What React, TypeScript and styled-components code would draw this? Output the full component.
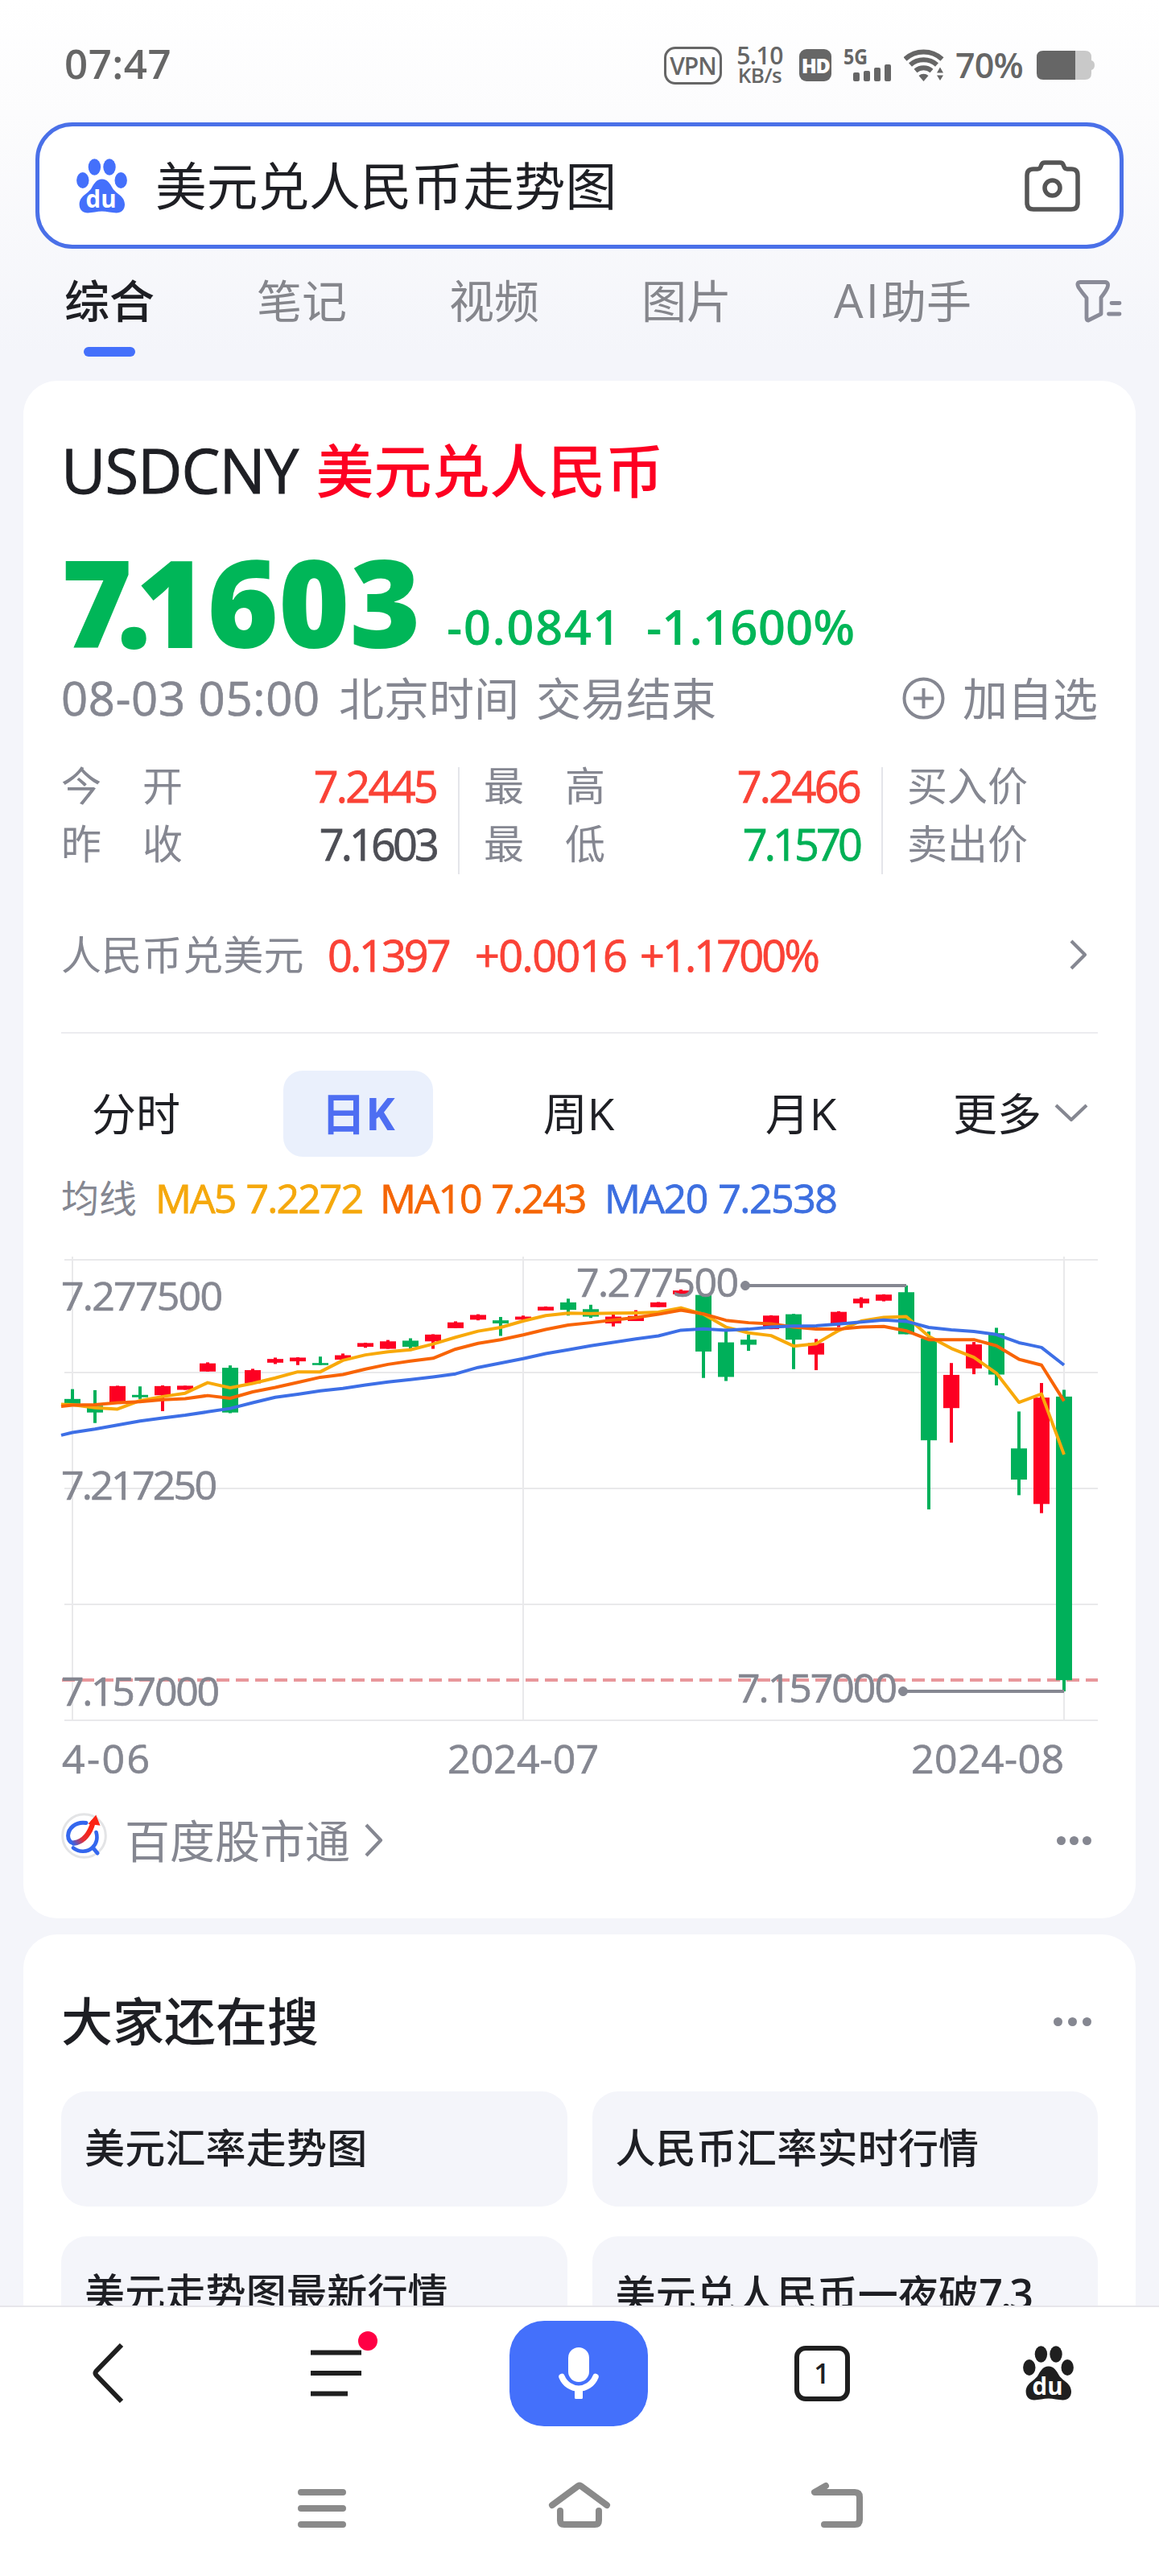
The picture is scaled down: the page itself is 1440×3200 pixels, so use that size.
import React from "react";
import styled, { createGlobalStyle } from "styled-components";

const palette = {
  ink: "#1e1f24",
  gray: "#858791",
  status: "#666666",
  blue: "#4e6ef2",
  red: "#fd0022",
  softRed: "#fa4236",
  green: "#00b658",
  candleGreen: "#00b05a",
  page: "#f4f5fa",
};

const GlobalStyle = createGlobalStyle`
  * { box-sizing: border-box; }
  html, body { margin: 0; padding: 0; background: #fff; }
  body { font-family: "Open Sans", "Noto Sans CJK SC", sans-serif; color: ${palette.ink}; }
  svg { display: block; flex: none; }
`;

const Screen = styled.div`
  width: 1440px;
  height: 3200px;
  display: flex;
  flex-direction: column;
  overflow: hidden;
  background: linear-gradient(#ffffff 0, #fcfcfd 140px, ${palette.page} 440px);
`;

/* ---------- status bar ---------- */

const StatusBar = styled.header`
  height: 152px;
  flex: none;
  padding: 0 80px 0 80px;
  display: flex;
  justify-content: space-between;
  color: ${palette.status};
`;

const Clock = styled.div`
  font-size: 51px;
  font-weight: 600;
  line-height: 156px;
  letter-spacing: 0.5px;
`;

const StatusIcons = styled.div`
  display: flex;
  align-items: center;
  height: 162px;
`;

const VpnBadge = styled.div`
  width: 72px;
  height: 47px;
  border: 3.5px solid ${palette.status};
  border-radius: 14px;
  font-size: 30px;
  font-weight: 600;
  line-height: 41px;
  letter-spacing: -1px;
  text-align: center;
`;

const NetSpeed = styled.div`
  width: 62px;
  margin-left: 16px;
  text-align: center;
  font-size: 30px;
  font-weight: 600;
  line-height: 25px;
  letter-spacing: -0.5px;
`;

const NetUnit = styled.div`
  font-size: 26px;
  line-height: 25px;
`;

const HdBadge = styled.div`
  width: 40px;
  height: 40px;
  margin-left: 18px;
  border-radius: 9px;
  background: ${palette.status};
  color: #fff;
  font-size: 25px;
  font-weight: 800;
  line-height: 40px;
  letter-spacing: -1.5px;
  text-align: center;
`;

const Signal = styled.svg`
  margin-left: 15px;
  overflow: visible;
`;

const Wifi = styled.svg`
  margin-left: 15px;
`;

const BatteryText = styled.div`
  width: 88px;
  margin-left: 14px;
  font-size: 43px;
  font-weight: 600;
  line-height: 48px;
  letter-spacing: -0.8px;
`;

const Battery = styled.svg`
  margin-left: 13px;
`;

/* ---------- search ---------- */

const SearchBox = styled.div`
  height: 157px;
  flex: none;
  margin: 0 44px;
  padding: 0 49px 0 46px;
  display: flex;
  align-items: center;
  border: 5px solid #4a70e8;
  border-radius: 46px;
  background: #fff;
`;

const Query = styled.div`
  flex: 1;
  margin-left: 35px;
  font-size: 63.7px;
  line-height: 90px;
`;

const TabBar = styled.nav`
  height: 164px;
  flex: none;
  display: flex;
  align-items: flex-start;
  gap: 127px;
  padding: 24px 0 0 80px;
`;

const Tab = styled.div<{ $active?: boolean }>`
  flex: none;
  display: flex;
  flex-direction: column;
  align-items: center;
  font-size: 56px;
  line-height: 80px;
  font-weight: ${(p) => (p.$active ? 500 : 400)};
  color: ${(p) => (p.$active ? palette.ink : "#85868c")};
  white-space: nowrap;
`;

const TabLabel = styled.div`
  display: flex;
`;

const TabLatin = styled.span`
  font-size: 58px;
  letter-spacing: 3px;
`;

const TabMark = styled.div`
  width: 64px;
  height: 12px;
  margin-top: 18px;
  border-radius: 6px;
  background: #4470fb;
`;

const FilterButton = styled.div`
  padding: 14px 0 0 2px;
`;

/* ---------- cards ---------- */

const Feed = styled.main`
  flex: 1;
  min-height: 0;
  overflow: hidden;
  display: flex;
  flex-direction: column;
  gap: 20px;
`;

const Card = styled.section`
  flex: none;
  margin: 0 29px;
  padding: 46px 47px 67px;
  border-radius: 42px;
  background: #fff;
`;

const Title = styled.h1`
  margin: 0;
  height: 132px;
  padding-bottom: 4px;
  display: flex;
  align-items: center;
  gap: 22px;
  font-size: 76px;
  font-weight: 400;
  letter-spacing: -0.9px;
  -webkit-text-stroke: 1px currentColor;
`;

const TitleName = styled.span`
  padding-bottom: 5px;
  color: ${palette.red};
  font-size: 72px;
  font-weight: 500;
  letter-spacing: 0;
  -webkit-text-stroke: 0;
`;

const PriceRow = styled.div`
  height: 191px;
  display: flex;
  align-items: flex-end;
  color: ${palette.green};
`;

const Price = styled.div`
  width: 479px;
  font-size: 151px;
  line-height: 191px;
  font-weight: 800;
`;

const Kern = styled.span<{ $by: number }>`
  letter-spacing: ${(p) => p.$by}px;
`;

const Change = styled.div<{ $w: number; $spacing: number }>`
  width: ${(p) => p.$w}px;
  white-space: nowrap;
  font-size: 60px;
  line-height: 127px;
  font-weight: 600;
  letter-spacing: ${(p) => p.$spacing}px;
`;

const TimeRow = styled.div`
  height: 50px;
  display: flex;
  align-items: center;
  font-size: 56px;
  line-height: 50px;
  color: ${palette.gray};
  white-space: nowrap;
`;

const Stamp = styled.span`
  width: 345px;
  font-size: 58px;
  letter-spacing: 0.7px;
  -webkit-text-stroke: 0.7px currentColor;
`;

const TimeNote = styled.span`
  width: 245px;
`;

const AddButton = styled.div`
  margin-left: auto;
  display: flex;
  align-items: center;
  gap: 22px;
`;

const Stats = styled.div`
  margin-top: 48px;
  height: 146px;
  display: flex;
`;

const StatColumn = styled.div<{ $w: number }>`
  width: ${(p) => p.$w}px;
`;

const StatRow = styled.div`
  height: 72px;
  display: flex;
  align-items: center;
  justify-content: space-between;
`;

const StatLabel = styled.div`
  width: 151px;
  display: flex;
  justify-content: space-between;
  font-size: 50px;
  line-height: 72px;
  color: ${palette.gray};
  white-space: nowrap;
`;

const Num = styled.div<{ $color: string; $w?: number; $spacing?: number }>`
  width: ${(p) => (p.$w ? p.$w + "px" : "auto")};
  font-size: 54px;
  line-height: 72px;
  letter-spacing: ${(p) => p.$spacing ?? -2.7}px;
  color: ${(p) => p.$color};
  white-space: nowrap;
  -webkit-text-stroke: 0.8px currentColor;
`;

const Divider = styled.div`
  width: 2px;
  height: 133px;
  margin: 13px 30px 0 27px;
  background: #e4e5ea;
`;

const InverseRow = styled.div`
  margin-top: 67px;
  height: 65px;
  display: flex;
  align-items: center;
`;

const InverseLabel = styled.div`
  width: 331px;
  font-size: 50px;
  line-height: 64px;
  letter-spacing: 0.3px;
  color: ${palette.gray};
`;

const RightSide = styled.div`
  margin-left: auto;
  padding-right: 13px;
`;

const Rule = styled.div`
  height: 2px;
  margin-top: 64px;
  background: #ececf0;
`;

const PeriodBar = styled.div`
  margin-top: 46px;
  height: 107px;
  display: flex;
  align-items: center;
`;

const Period = styled.div<{ $active?: boolean; $gap?: number }>`
  width: 186px;
  height: 107px;
  margin-right: ${(p) => p.$gap ?? 0}px;
  display: flex;
  align-items: center;
  justify-content: center;
  border-radius: 24px;
  font-size: 55px;
  line-height: 105px;
  padding-bottom: 2px;
  white-space: nowrap;
  font-weight: ${(p) => (p.$active ? 700 : 400)};
  color: ${(p) => (p.$active ? palette.blue : palette.ink)};
  background: ${(p) => (p.$active ? "#eaf0fc" : "transparent")};
`;

const MorePeriod = styled.div`
  display: flex;
  align-items: center;
  gap: 16px;
  padding-bottom: 2px;
  font-size: 55px;
  line-height: 105px;
`;

const AverageRow = styled.div`
  margin-top: 21px;
  height: 60px;
  display: flex;
  align-items: center;
`;

const AverageLabel = styled.div`
  width: 117px;
  font-size: 47px;
  line-height: 60px;
  color: ${palette.gray};
`;

const Average = styled.div<{ $color: string; $spacing: number }>`
  width: 279px;
  font-size: 50px;
  line-height: 60px;
  letter-spacing: ${(p) => p.$spacing}px;
  word-spacing: 2px;
  white-space: nowrap;
  color: ${(p) => p.$color};
  -webkit-text-stroke: 0.8px currentColor;
`;

const ChartSvg = styled.svg`
  margin-top: 22px;
  overflow: visible;
  font-family: "Open Sans", sans-serif;
`;

const SourceRow = styled.div`
  margin-top: 36px;
  height: 60px;
  display: flex;
  align-items: center;
  font-size: 56px;
  line-height: 60px;
  color: ${palette.gray};
`;

const LogoSlot = styled.div`
  align-self: flex-start;
  margin-top: -4px;
`;

const SourceName = styled.span`
  margin: 0 18px 0 22px;
`;

const MoreDots = styled.div<{ $gap: number; $inset: number }>`
  margin-left: auto;
  padding-right: ${(p) => p.$inset}px;
  display: flex;
  gap: ${(p) => p.$gap}px;
`;

const Dot = styled.i`
  width: 11px;
  height: 11px;
  border-radius: 50%;
  background: ${palette.gray};
`;

const SectionHead = styled.div`
  margin-top: 22px;
  height: 80px;
  display: flex;
  align-items: center;
`;

const SectionTitle = styled.h2`
  margin: 0;
  font-size: 64px;
  line-height: 80px;
  font-weight: 500;
`;

const ChipGrid = styled.div`
  margin-top: 47px;
  display: grid;
  grid-template-columns: 1fr 1fr;
  gap: 37px 31px;
`;

const Chip = styled.div`
  height: 143px;
  padding-left: 29px;
  border-radius: 32px;
  background: ${palette.page};
  font-size: 50px;
  line-height: 141px;
  font-weight: 500;
  letter-spacing: 0.2px;
  white-space: nowrap;
`;

const ChipNumber = styled.span`
  font-size: 52px;
  font-weight: 600;
  letter-spacing: -3px;
`;

/* ---------- bottom bars ---------- */

const BottomArea = styled.footer`
  height: 336px;
  flex: none;
  border-top: 2px solid #e6e6ea;
  background: #fff;
`;

const BrowserBar = styled.div`
  height: 164px;
  padding-right: 2px;
  display: grid;
  grid-template-columns: 270px 294px 310px 294px 268px;
  align-items: center;
  justify-items: center;
`;

const MicButton = styled.div`
  width: 172px;
  height: 131px;
  display: flex;
  align-items: center;
  justify-content: center;
  border-radius: 43px;
  background: #4470fb;
`;

const MenuButton = styled.div`
  position: relative;
`;

const Badge = styled.i`
  position: absolute;
  top: -23px;
  left: 59px;
  width: 24px;
  height: 24px;
  border-radius: 50%;
  background: #ff0044;
`;

const TabCount = styled.div`
  width: 69px;
  height: 69px;
  border: 6px solid #1f1f1f;
  border-radius: 14px;
  font-size: 34px;
  font-weight: 600;
  line-height: 56px;
  text-align: center;
`;

const SystemBar = styled.div`
  height: 170px;
  padding: 0 240px;
  display: grid;
  grid-template-columns: repeat(3, 320px);
  align-items: center;
  justify-items: center;
`;

/* ---------- icons ---------- */

const Paw = ({ color }: { color: string }) => (
  <svg width="63" height="68" viewBox="0 0 63 68">
    <g fill={color}>
      <ellipse cx="22.4" cy="10.5" rx="7.7" ry="10.3" />
      <ellipse cx="41" cy="10.5" rx="7.7" ry="10.3" />
      <ellipse cx="7.8" cy="27" rx="7.7" ry="10" />
      <ellipse cx="55.2" cy="27" rx="7.7" ry="10" />
      <path d="M31.7 25.6C38.5 25.6 41.5 31 45 37C49 43.500 60 46.500 60 57C60 63.500 55.500 67.500 49.500 67.500C43 67.500 38 65.600 31.700 65.600C25.400 65.600 20.500 67.500 14 67.500C8 67.500 3.600 63.500 3.600 57C3.600 46.500 14.500 43.500 18.500 37C22 31 25 25.600 31.700 25.600Z" />
    </g>
    <text x="11.500" y="60.500" fontSize="31" fontWeight="700" fill="#fff" textLength="38" lengthAdjust="spacingAndGlyphs">
      du
    </text>
  </svg>
);

const Chevron = ({ w, h, d, color = palette.gray }: { w: number; h: number; d: string; color?: string }) => (
  <svg width={w} height={h} viewBox={`0 0 ${w} ${h}`} fill="none" stroke={color} strokeWidth="4.2" strokeLinejoin="round">
    <path d={d} />
  </svg>
);

const SourceLogo = () => (
  <svg width="57" height="57" viewBox="0 0 57 57" fill="none" strokeLinecap="round">
    <defs>
      <linearGradient id="rise" x1="14" y1="38" x2="34" y2="22" gradientUnits="userSpaceOnUse">
        <stop offset="0" stopColor="#3565ea" />
        <stop offset="0.5" stopColor="#e0303c" />
        <stop offset="1" stopColor="#fb2414" />
      </linearGradient>
    </defs>
    <circle cx="28.500" cy="28.500" r="26.800" fill="#fff" stroke="#e3e4e6" strokeWidth="3" />
    <path d="M31 12.500C17 10.500 9 20 8.600 28C8.400 34 12 38 17.500 37.500" stroke="#3467ee" strokeWidth="5" />
    <path d="M15 43.500C22 49.500 33 49 39 43C44 38 45.500 31 43.500 24" stroke="#3467ee" strokeWidth="4.600" />
    <path d="M40 44L45 50" stroke="#3467ee" strokeWidth="5" />
    <path d="M16 37.500C28 36 36 25 39.500 12" stroke="url(#rise)" strokeWidth="6.500" />
    <path d="M43 4.500L47 14.500L35.500 13Z" fill="#fb2414" stroke="#fb2414" strokeWidth="2" />
  </svg>
);

/* ---------- chart ---------- */

type Candle = [up: 0 | 1, top: number, bottom: number, high: number, low: number];

// Vertical chart units, measured downward from the top of the plot
const candles: Candle[] = [
  [0, 470, 484, 441, 484], [0, 490, 510, 444, 541], [1, 432, 481, 431, 481], [0, 458, 465, 433, 470],
  [1, 432, 459, 430, 506], [1, 431, 443, 431, 443], [1, 365, 389, 362, 389], [0, 378, 510, 371, 512],
  [1, 385, 424, 381, 424], [1, 352, 363, 348, 367], [1, 348, 359, 347, 370], [0, 364, 370, 345, 370],
  [1, 341, 354, 336, 354], [1, 305, 316, 304, 319], [1, 300, 322, 296, 322], [0, 298, 316, 291, 328],
  [1, 280, 300, 279, 322], [1, 244, 261, 241, 261], [1, 222, 236, 220, 238], [0, 238, 247, 228, 284],
  [1, 227, 236, 224, 240], [1, 198, 209, 197, 209], [0, 185, 207, 174, 224], [0, 205, 227, 192, 231],
  [1, 227, 247, 220, 256], [1, 225, 240, 208, 240], [1, 185, 199, 184, 199], [1, 150, 161, 147, 161],
  [0, 163, 330, 163, 408], [0, 303, 405, 267, 417], [0, 295, 310, 280, 328], [1, 224, 264, 223, 264],
  [0, 220, 295, 219, 382], [1, 305, 339, 293, 385], [1, 213, 247, 211, 258], [1, 174, 188, 170, 201],
  [1, 162, 180, 161, 182], [0, 155, 279, 135, 279], [0, 292, 592, 271, 796], [1, 399, 497, 364, 599],
  [1, 309, 380, 302, 397], [0, 276, 398, 260, 430], [0, 616, 708, 507, 754], [1, 466, 780, 423, 807],
  [0, 463, 1300, 443, 1333],
];

const ma5 = [487, 496, 500, 475, 463, 453, 422, 437, 424, 408, 390, 390, 356, 340, 331, 325, 308, 288, 270, 259, 240, 224, 217, 218, 217, 216, 214, 201, 220, 258, 275, 283, 314, 307, 268, 240, 229, 227, 285, 321, 347, 394, 480, 455, 634];
const ma10 = [488, 487, 481, 478, 472, 469, 460, 468, 449, 436, 421, 406, 398, 382, 368, 358, 350, 323, 306, 295, 281, 265, 252, 245, 237, 230, 220, 208, 219, 238, 245, 248, 258, 264, 264, 258, 256, 269, 295, 295, 295, 313, 353, 370, 476];
const ma20 = [569, 559, 547, 535, 526, 518, 508, 498, 481, 465, 456, 446, 439, 429, 420, 413, 405, 396, 377, 364, 351, 336, 325, 313, 303, 293, 284, 267, 263, 267, 264, 258, 255, 254, 249, 243, 237, 241, 259, 266, 271, 280, 304, 318, 370];

const px = (unit: number) => unit / 2.3758;
const slotX = (i: number) => 14 + i * 28;
const trace = (values: number[], start: number) =>
  `M0 ${px(start)}` + values.map((v, i) => `L${slotX(i)} ${px(v)}`).join("");

const gridRows = [25, 165, 309, 453, 597];
const gridColumns = [14, 574, 1246];

const axisText = [
  { x: 0, y: 88, w: 201, s: "7.277500" },
  { x: 0, y: 323, w: 194, s: "7.217250" },
  { x: 0, y: 579, w: 197, s: "7.157000" },
  { x: 640, y: 71, w: 202, s: "7.277500" },
  { x: 840, y: 575, w: 199, s: "7.157000" },
  { x: 1, y: 663, w: 109, s: "4-06" },
  { x: 480, y: 663, w: 188, s: "2024-07" },
  { x: 1056, y: 663, w: 190, s: "2024-08" },
];

const KLineChart = () => (
  <ChartSvg width="1288" height="680" viewBox="0 0 1288 680">
    <g stroke="#e9e9eb" strokeWidth="2">
      {gridRows.map((y) => <path key={y} d={`M4 ${y}H1288`} />)}
      {gridColumns.map((x) => <path key={x} d={`M${x} 21V597`} />)}
    </g>
    <path d="M0 547H1288" stroke="#e8979b" strokeWidth="4" strokeDasharray="16 8" strokeDashoffset="-1" />
    {candles.map(([up, top, bottom, high, low], i) => (
      <g key={i} fill={up ? palette.red : palette.candleGreen}>
        <rect x={slotX(i) - 2} y={px(high)} width="4" height={px(low - high)} />
        <rect x={slotX(i) - 10} y={px(top)} width="20" height={px(bottom - top)} />
      </g>
    ))}
    <g fill="none" strokeWidth="4" strokeLinejoin="round">
      <path d={trace(ma5, 486)} stroke="#f8a90a" />
      <path d={trace(ma10, 492)} stroke="#f86406" />
      <path d={trace(ma20, 577)} stroke="#3d6fe6" />
    </g>
    <g fill={palette.gray} stroke={palette.gray}>
      <path d="M850 57H1050M1046 561H1246" strokeWidth="4" />
      <circle cx="850" cy="57" r="5.500" />
      <circle cx="1046" cy="561" r="5.500" />
    </g>
    <g fill={palette.gray} stroke={palette.gray} strokeWidth="0.7" fontSize="50">
      {axisText.map((t) => (
        <text key={t.x + "-" + t.y} x={t.x} y={t.y} textLength={t.w}>{t.s}</text>
      ))}
    </g>
  </ChartSvg>
);

const suggestions = [
  { text: "美元汇率走势图" },
  { text: "人民币汇率实时行情" },
  { text: "美元走势图最新行情" },
  { text: "美元兑人民币一夜破", number: "7.3" },
];

export default function App() {
  return (
    <Screen>
      <GlobalStyle />
      <StatusBar>
        <Clock>07:47</Clock>
        <StatusIcons>
          <VpnBadge>VPN</VpnBadge>
          <NetSpeed>
            5.10
            <NetUnit>KB/s</NetUnit>
          </NetSpeed>
          <HdBadge>HD</HdBadge>
          <Signal width="60" height="42" viewBox="0 0 60 42" fill={palette.status}>
            <text x="0" y="20" fontSize="27" fontWeight="700" textLength="30" lengthAdjust="spacingAndGlyphs">5G</text>
            <rect x="12" y="30" width="8" height="11" rx="2" />
            <rect x="25" y="28" width="8" height="13" rx="2" />
            <rect x="38" y="24" width="8" height="17" rx="2" />
            <rect x="51" y="20" width="8" height="21" rx="2" />
          </Signal>
          <Wifi width="50" height="40" viewBox="0 0 50 40" fill="none" stroke={palette.status} strokeWidth="6">
            <path d="M1.500 12.500A34 34 0 0 1 47.500 12.500M8 19.500A25 25 0 0 1 41 19.500M14.500 27A15.500 15.500 0 0 1 34.500 27" />
            <path d="M24.500 40L18.500 33A9 9 0 0 1 30.500 33ZM41 29.500L45 22.500L49 29.500ZM41 32.500L45 39L49 32.500Z" fill={palette.status} stroke="none" />
          </Wifi>
          <BatteryText>70%</BatteryText>
          <Battery width="72" height="36" viewBox="0 0 72 36">
            <path d="M48 0H60Q68 0 68 8V12Q72 13 72 18T68 24V28Q68 36 60 36H48Z" fill="#c9c9c9" />
            <path d="M8 0H48V36H8Q0 36 0 28V8Q0 0 8 0Z" fill={palette.status} />
          </Battery>
        </StatusIcons>
      </StatusBar>

      <SearchBox>
        <Paw color="#4470fb" />
        <Query>美元兑人民币走势图</Query>
        <svg width="69" height="64" viewBox="0 0 69 64" fill="none" stroke="#555" strokeWidth="5.500" strokeLinejoin="round">
          <path d="M11 11H16Q19 11 20 8L21 5.500Q22 3 25 3H44Q47 3 48 5.500L49 8Q50 11 53 11H58Q66 11 66 19V53Q66 61 58 61H11Q3 61 3 53V19Q3 11 11 11Z" />
          <circle cx="34.500" cy="34.500" r="9.500" />
        </svg>
      </SearchBox>

      <TabBar>
        <Tab $active>
          综合
          <TabMark />
        </Tab>
        <Tab>笔记</Tab>
        <Tab>视频</Tab>
        <Tab>图片</Tab>
        <Tab>
          <TabLabel><TabLatin>AI</TabLatin>助手</TabLabel>
        </Tab>
        <FilterButton>
          <svg width="58" height="54" viewBox="0 0 58 54" fill="none" stroke="#8a8b98" strokeWidth="4.800" strokeLinejoin="round" strokeLinecap="round">
            <path d="M6 3.500H37Q42 4 40 10Q38 15 32 22.500V43L16 51Q14 51 14 48V23Q8 16 4 10Q1 4 6 3.500Z" />
            <path d="M45 29.500H55M41.500 43H55" />
          </svg>
        </FilterButton>
      </TabBar>

      <Feed>
        <Card>
          <Title>
            USDCNY
            <TitleName>美元兑人民币</TitleName>
          </Title>
          <PriceRow>
            <Price><Kern $by={-20}>7</Kern><Kern $by={-19}>.</Kern>1603</Price>
            <Change $w={248} $spacing={1.4}>-0.0841</Change>
            <Change $w={260} $spacing={0}>-1.1600%</Change>
          </PriceRow>
          <TimeRow>
            <Stamp>08-03 05:00</Stamp>
            <TimeNote>北京时间</TimeNote>
            <TimeNote>交易结束</TimeNote>
            <AddButton>
              <svg width="53" height="53" viewBox="0 0 53 53" fill="none" stroke={palette.gray} strokeWidth="4">
                <circle cx="26.500" cy="26.500" r="24" />
                <path d="M14 26.500H39M26.500 14V39" />
              </svg>
              加自选
            </AddButton>
          </TimeRow>

          <Stats>
            <StatColumn $w={466}>
              <StatRow>
                <StatLabel><span>今</span><span>开</span></StatLabel>
                <Num $color={palette.softRed}>7.2445</Num>
              </StatRow>
              <StatRow>
                <StatLabel><span>昨</span><span>收</span></StatLabel>
                <Num $color="#4d4e55" $spacing={-3.9}>7.1603</Num>
              </StatRow>
            </StatColumn>
            <Divider />
            <StatColumn $w={467}>
              <StatRow>
                <StatLabel><span>最</span><span>高</span></StatLabel>
                <Num $color={palette.softRed}>7.2466</Num>
              </StatRow>
              <StatRow>
                <StatLabel><span>最</span><span>低</span></StatLabel>
                <Num $color="#00b055" $spacing={-3.9}>7.1570</Num>
              </StatRow>
            </StatColumn>
            <Divider />
            <StatColumn $w={236}>
              <StatRow><StatLabel>买入价</StatLabel></StatRow>
              <StatRow><StatLabel>卖出价</StatLabel></StatRow>
            </StatColumn>
          </Stats>

          <InverseRow>
            <InverseLabel>人民币兑美元</InverseLabel>
            <Num $color={palette.softRed} $w={183} $spacing={-3}>0.1397</Num>
            <Num $color={palette.softRed} $w={205} $spacing={-1.6}>+0.0016</Num>
            <Num $color={palette.softRed} $w={240} $spacing={-2.9}>+1.1700%</Num>
            <RightSide>
              <Chevron w={22} h={38} d="M2 2L19 19L2 36" />
            </RightSide>
          </InverseRow>
          <Rule />

          <PeriodBar>
            <Period $gap={90}>分时</Period>
            <Period $active $gap={88}>日K</Period>
            <Period $gap={90}>周K</Period>
            <Period $gap={96}>月K</Period>
            <MorePeriod>
              更多
              <Chevron w={42} h={24} d="M2 2L21 20L40 2" />
            </MorePeriod>
          </PeriodBar>

          <AverageRow>
            <AverageLabel>均线</AverageLabel>
            <Average $color="#f5a80c" $spacing={-1.9}>MA5 7.2272</Average>
            <Average $color="#f56606" $spacing={-2.1}>MA10 7.243</Average>
            <Average $color="#3d6fe0" $spacing={-1.5}>MA20 7.2538</Average>
          </AverageRow>

          <KLineChart />

          <SourceRow>
            <LogoSlot><SourceLogo /></LogoSlot>
            <SourceName>百度股市通</SourceName>
            <Chevron w={24} h={42} d="M2 2L20 21L2 40" />
            <MoreDots $gap={5} $inset={8}><Dot /><Dot /><Dot /></MoreDots>
          </SourceRow>
        </Card>

        <Card>
          <SectionHead>
            <SectionTitle>大家还在搜</SectionTitle>
            <MoreDots $gap={7} $inset={8}><Dot /><Dot /><Dot /></MoreDots>
          </SectionHead>
          <ChipGrid>
            {suggestions.map((s) => (
              <Chip key={s.text}>
                {s.text}
                {s.number && <ChipNumber>{s.number}</ChipNumber>}
              </Chip>
            ))}
          </ChipGrid>
        </Card>
      </Feed>

      <BottomArea>
        <BrowserBar>
          <svg width="40" height="74" viewBox="0 0 40 74" fill="none" stroke="#1f1f1f" strokeWidth="6" strokeLinejoin="round">
            <path d="M36 2L4.500 34.500Q2.500 37 4.500 39.500L36 72" />
          </svg>
          <MenuButton>
            <svg width="63" height="58" viewBox="0 0 63 58" stroke="#1f1f1f" strokeWidth="6">
              <path d="M0 3.500H63M0 29H63M0 54.500H46" />
            </svg>
            <Badge />
          </MenuButton>
          <MicButton>
            <svg width="50" height="64" viewBox="0 0 50 64" fill="#fff">
              <rect x="12" y="0" width="26" height="43" rx="13" />
              <path d="M4 36.500C12 56 38 56 46 36.500" fill="none" stroke="#fff" strokeWidth="7.500" strokeLinecap="round" />
              <rect x="20" y="51" width="10" height="13" rx="1.500" />
            </svg>
          </MicButton>
          <TabCount>1</TabCount>
          <Paw color="#1f1f1f" />
        </BrowserBar>
        <SystemBar>
          <svg width="60" height="50" viewBox="0 0 60 50" stroke="#8a8a8a" strokeWidth="8" strokeLinecap="round">
            <path d="M4 6H56M4 26H56M4 46H56" />
          </svg>
          <svg width="78" height="66" viewBox="0 0 78 66" fill="none" stroke="#8a8a8a" strokeWidth="8" strokeLinecap="round" strokeLinejoin="round">
            <path d="M5 30L37.500 6Q39 5 40.500 6L73 30M15 37V49Q15 54 20 54H58Q63 54 63 49V37" />
          </svg>
          <svg width="64" height="64" viewBox="0 0 64 64" fill="none" stroke="#8a8a8a" strokeWidth="8" strokeLinecap="round" strokeLinejoin="round">
            <path d="M18 5L4 13H54Q60 13 60 19V47Q60 53 54 53H16" />
          </svg>
        </SystemBar>
      </BottomArea>
    </Screen>
  );
}
